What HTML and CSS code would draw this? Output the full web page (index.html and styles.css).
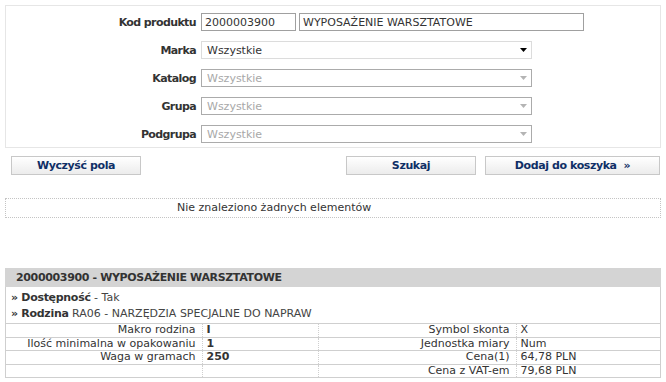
FILE: index.html
```html
<!DOCTYPE html>
<html lang="pl">
<head>
  <meta charset="UTF-8" />
  <title>Wyszukiwanie produktów</title>
  <link rel="stylesheet" href="styles.css">
</head>
<body>
  <div class="page">

    <form class="search-box">
      <label class="field-label" for="code">Kod produktu</label>
      <div class="controls">
        <input type="text" id="code" class="input input-code" value="2000003900" />
        <input type="text" class="input input-name" value="WYPOSAŻENIE WARSZTATOWE" />
      </div>

      <label class="field-label" for="brand">Marka</label>
      <span class="select-wrap">
        <select id="brand" class="select"><option>Wszystkie</option></select>
        <svg class="arrow" width="7" height="4" viewBox="0 0 7 4"><path d="M0 0h7L3.5 4z" fill="#000"/></svg>
      </span>

      <label class="field-label" for="catalog">Katalog</label>
      <span class="select-wrap">
        <select id="catalog" class="select" disabled><option>Wszystkie</option></select>
        <svg class="arrow" width="7" height="4" viewBox="0 0 7 4"><path d="M0 0h7L3.5 4z" fill="#b4b4b4"/></svg>
      </span>

      <label class="field-label" for="group">Grupa</label>
      <span class="select-wrap">
        <select id="group" class="select" disabled><option>Wszystkie</option></select>
        <svg class="arrow" width="7" height="4" viewBox="0 0 7 4"><path d="M0 0h7L3.5 4z" fill="#b4b4b4"/></svg>
      </span>

      <label class="field-label" for="subgroup">Podgrupa</label>
      <span class="select-wrap">
        <select id="subgroup" class="select" disabled><option>Wszystkie</option></select>
        <svg class="arrow" width="7" height="4" viewBox="0 0 7 4"><path d="M0 0h7L3.5 4z" fill="#b4b4b4"/></svg>
      </span>
    </form>

    <div class="actions">
      <button type="button" class="btn btn-clear">Wyczyść pola</button>
      <button type="button" class="btn btn-search">Szukaj</button>
      <button type="button" class="btn btn-cart">Dodaj do koszyka &nbsp;»</button>
    </div>

    <div class="results">Nie znaleziono żadnych elementów</div>

    <div class="product">
      <div class="product-head">2000003900 - WYPOSAŻENIE WARSZTATOWE</div>
      <div class="product-body">
        <p class="info"><b>»</b> <b>Dostępność</b> - Tak</p>
        <p class="info"><b>»</b> <b>Rodzina</b> RA06 - NARZĘDZIA SPECJALNE DO NAPRAW</p>

        <table class="params">
          <colgroup>
            <col class="c-label" />
            <col class="c-value" />
            <col class="c-label2" />
            <col />
          </colgroup>
          <tr>
            <td class="lbl">Makro rodzina</td>
            <td class="val"><b>I</b></td>
            <td class="lbl">Symbol skonta</td>
            <td class="val">X</td>
          </tr>
          <tr>
            <td class="lbl">Ilość minimalna w opakowaniu</td>
            <td class="val"><b>1</b></td>
            <td class="lbl">Jednostka miary</td>
            <td class="val">Num</td>
          </tr>
          <tr>
            <td class="lbl">Waga w gramach</td>
            <td class="val"><b>250</b></td>
            <td class="lbl">Cena(1)</td>
            <td class="val">64,78 PLN</td>
          </tr>
          <tr>
            <td class="lbl"></td>
            <td class="val"></td>
            <td class="lbl">Cena z VAT-em</td>
            <td class="val">79,68 PLN</td>
          </tr>
        </table>
      </div>
    </div>

  </div>
</body>
</html>
```

FILE: styles.css
```css
body {
  margin: 0;
  font-family: "DejaVu Sans", Verdana, sans-serif;
  font-size: 11px;
  color: #333;
  background: #fff;
}

.page {
  padding: 5px;
}

/* search form */

.search-box {
  display: grid;
  grid-template-columns: 190px 1fr;
  column-gap: 5px;
  row-gap: 10px;
  align-items: center;
  margin: 0;
  padding: 7px 0 4px;
  border: 1px solid #e6e6e6;
}

.field-label {
  text-align: right;
  font-weight: bold;
  letter-spacing: -0.6px;
  color: #333;
}

.controls {
  display: flex;
  gap: 3px;
}

.input {
  box-sizing: border-box;
  height: 18px;
  margin: 0;
  padding: 0 3px;
  border: 1px solid #a0a0a0;
  font-family: inherit;
  font-size: 11px;
  color: #333;
  background: #fff;
}

.input-code {
  width: 95px;
}

.input-name {
  width: 285px;
}

.select-wrap {
  position: relative;
  display: block;
  width: 331px;
  height: 18px;
}

.select {
  appearance: none;
  -webkit-appearance: none;
  box-sizing: border-box;
  width: 100%;
  height: 18px;
  margin: 0;
  padding: 0 0 0 5px;
  border: 1px solid #dcdcdc;
  border-radius: 0;
  font-family: inherit;
  font-size: 11px;
  color: #333;
  background: #fff;
}

.select:disabled {
  border-color: #ababab;
  color: #a8a8a8;
  opacity: 1;
}

.arrow {
  position: absolute;
  right: 5px;
  top: 7px;
}

/* buttons */

.actions {
  display: flex;
  gap: 9px;
  margin-top: 8px;
  padding: 0 1px 0 6px;
}

.btn {
  box-sizing: border-box;
  height: 19px;
  margin: 0;
  padding: 0;
  border: 1px solid #c8c8c8;
  background: linear-gradient(#ffffff, #ececec);
  font-family: inherit;
  font-size: 11px;
  font-weight: bold;
  letter-spacing: -0.4px;
  color: #0f2f66;
  cursor: pointer;
}

.btn-clear,
.btn-search {
  width: 130px;
}

.btn-search {
  margin-left: auto;
}

.btn-cart {
  width: 175px;
}

/* results */

.results {
  height: 18px;
  line-height: 18px;
  margin-top: 23px;
  padding-left: 171px;
  border: 1px dotted #c4c4c4;
  color: #333;
}

/* product card */

.product {
  margin-top: 50px;
}

.product-head {
  height: 19px;
  line-height: 19px;
  padding-left: 11px;
  background: #d4d4d4;
  font-weight: bold;
  letter-spacing: -0.35px;
  color: #333;
}

.product-body {
  padding-top: 3px;
  border: 1px solid #cfcfcf;
  border-top: none;
}

.info {
  margin: 0;
  padding-left: 5px;
  line-height: 16px;
  color: #444;
}

.info b {
  color: #333;
  letter-spacing: -0.3px;
}

.params {
  width: 100%;
  margin-top: 1px;
  border-collapse: collapse;
  table-layout: fixed;
}

.c-label {
  width: 196px;
}

.c-value {
  width: 116px;
}

.c-label2 {
  width: 198px;
}

.params td {
  height: 12.5px;
  padding: 0;
  line-height: 12.5px;
  border-top: 1px solid #cfcfcf;
  white-space: nowrap;
}

.params td + td {
  border-left: 1px dotted #cfcfcf;
}

.params .lbl {
  text-align: right;
  padding-right: 6px;
}

.params .val {
  padding-left: 4px;
}
```
